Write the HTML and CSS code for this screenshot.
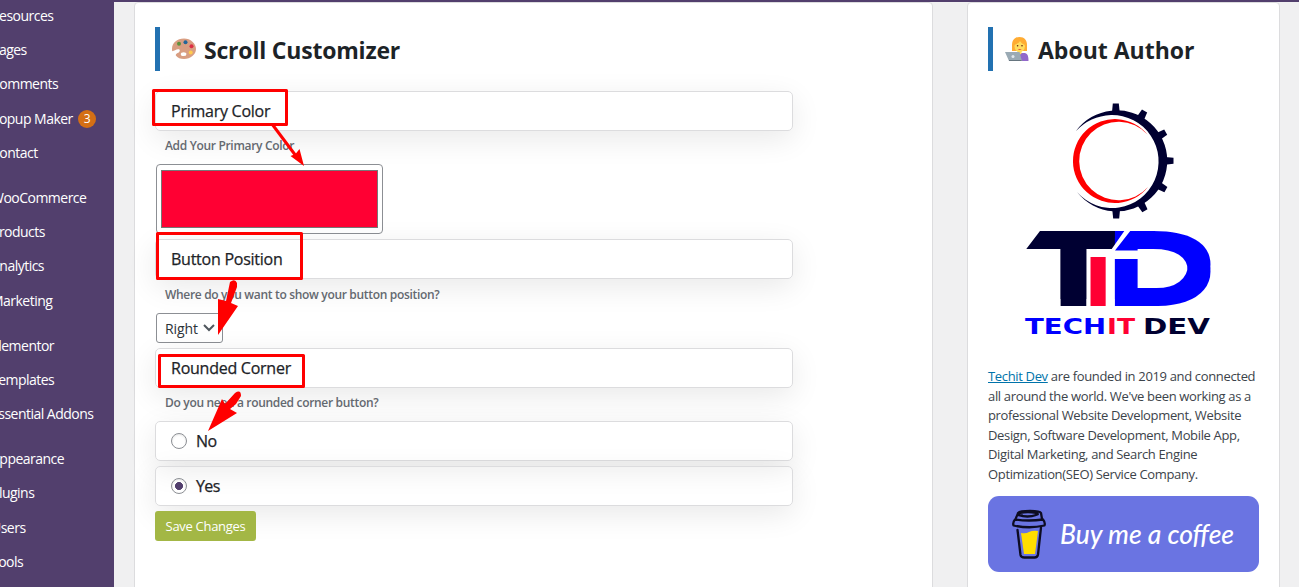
FILE: index.html
```html
<!DOCTYPE html>
<html lang="en">
<head>
<meta charset="utf-8">
<title>Scroll Customizer</title>
<link rel="stylesheet" href="styles.css">
</head>
<body>
<div class="topbar"></div>
<div class="layout">
  <nav class="sidebar">
    <ul class="group"><li>Resources</li><li>Pages</li><li>Comments</li><li>Popup Maker <span class="count">3</span></li><li>Contact</li></ul>
    <ul class="group"><li>WooCommerce</li><li>Products</li><li>Analytics</li><li>Marketing</li></ul>
    <ul class="group"><li>Elementor</li><li>Templates</li><li>Essential Addons</li></ul>
    <ul class="group"><li>Appearance</li><li>Plugins</li><li>Users</li><li>Tools</li></ul>
  </nav>
  <main class="panel settings">
    <h2 class="title">
      <svg class="emoji" viewBox="0 0 24 24"><path fill="#d99e82" d="M12 1.500C5 1.500 0 6 0 12c0 .8.1 1.600.3 2.200C2 14 4 12.500 6 12.300 8.500 12.200 8 14.500 6.800 15.400 5 16 3.500 17 3.800 18.500 5.500 21 8.500 22 12 22c6.500 0 12-4.500 12-10S18.500 1.500 12 1.500z"/><ellipse cx="11.600" cy="17.200" rx="2.800" ry="1.900" fill="#fff"/><circle cx="7" cy="6.800" r="2" fill="#5c913b"/><circle cx="13.500" cy="5.200" r="2" fill="#226699"/><circle cx="19.500" cy="9.300" r="2" fill="#dd2e44"/><circle cx="18.700" cy="15.500" r="2" fill="#ffcc4d"/></svg>
      <span class="title-main">Scroll Customizer</span>
    </h2>
    <div class="field">Primary Color</div>
    <p class="hint">Add Your Primary Color</p>
    <div class="color"><div class="swatch"></div></div>
    <div class="field">Button Position</div>
    <p class="hint hint-low">Where do you want to show your button position?</p>
    <div class="select"><span>Right</span><svg width="12" height="8" viewBox="0 0 12 8"><path d="M1 1l5 5 5-5" fill="none" stroke="#50575e" stroke-width="2"/></svg></div>
    <div class="field">Rounded Corner</div>
    <p class="hint">Do you need a rounded corner button?</p>
    <label class="field option"><span class="radio"></span>No</label>
    <label class="field option"><span class="radio checked"></span>Yes</label>
    <button class="save">Save Changes</button>
  </main>
  <aside class="panel author">
    <h2 class="title">
      <svg class="emoji" viewBox="0 0 24 24"><path fill="#ffac33" d="M14.500 0C9.500 0 7 3.500 7 8v6h15V8c0-4.500-2.500-8-7.500-8z"/><path fill="#9268ca" d="M9 24c0-5 2-8 6-8h4c3 0 4.500 2 4.500 8z"/><path fill="#ffdc5d" d="M12.500 12h4v4.500c-1 1.500-3 1.500-4 0z"/><ellipse cx="14.700" cy="9.300" rx="5.200" ry="6" fill="#ffdc5d"/><path fill="#ffac33" d="M9 8c3-1 5-2 6-4 1 2 3 3 5 4l-1-5-5-2-4 2z"/><circle cx="12.600" cy="8.700" r=".8" fill="#662113"/><circle cx="17" cy="8.700" r=".8" fill="#662113"/><path d="M12.700 12.300q2 1.500 4 0z" fill="#df1f32"/><path fill="#9aaab4" d="M0 15h14.500l2 7.500.8 1.500H4z"/><path fill="#66757f" d="M4 23h12.500v1H4z"/><circle cx="8" cy="19.500" r="1.500" fill="#e1e8ed"/></svg>
      <span class="title-side">About Author</span>
    </h2>
    <svg class="logo" width="271" height="271" viewBox="988 84 271 271">
      <defs><filter id="thick" x="-10%" y="-10%" width="120%" height="130%"><feOffset dy="7" result="low"/><feMerge><feMergeNode in="low"/><feMergeNode in="SourceGraphic"/></feMerge></filter></defs>
      <path fill="#000031" d="M1076 131A50.500 50.500 0 1 1 1077 192A46.500 46.500 0 1 0 1111 115Q1090 116 1076 131z"/>
      <g fill="#000031"><path id="cog" d="M1112 112l.8-8.500h6l.9 8.500z"/><use href="#cog" transform="rotate(30 1116 161)"/><use href="#cog" transform="rotate(60 1116 161)"/><use href="#cog" transform="rotate(90 1116 161)"/><use href="#cog" transform="rotate(120 1116 161)"/><use href="#cog" transform="rotate(150 1116 161)"/><use href="#cog" transform="rotate(180 1116 161)"/></g>
      <path fill="#f00" d="M1147.500 134.500A42 42 0 1 0 1148 187A39.300 39.300 0 1 1 1147.500 134.500z"/>
      <g class="mark">
        <text class="mark-tall" fill="#000031" filter="url(#thick)" transform="matrix(1.830 0 0 1 1019 299)">T</text>
        <text class="mark-short" fill="#ff0033" transform="matrix(1.500 0 0 1 1083.500 305.500)">I</text>
        <text class="mark-tall" fill="#0000ff" filter="url(#thick)" transform="matrix(1.600 0 0 1 1104.600 299)">D</text>
      </g>
      <path fill="#fff" d="M1020 229h21.500L1025.500 250v2H1020zM1125 230h6l-16 20.500h23v8.500h-27v-9z"/>
      <g class="wordmark">
        <text x="1025" y="334" textLength="81" lengthAdjust="spacingAndGlyphs" fill="#0000ff">TECH</text>
        <text x="1107" y="334" textLength="28" lengthAdjust="spacingAndGlyphs" fill="#ff0033">IT</text>
        <text x="1143" y="334" textLength="67" lengthAdjust="spacingAndGlyphs" fill="#000031">DEV</text>
      </g>
    </svg>
    <p class="bio"><a class="link">Techit Dev</a> are founded in 2019 and connected<br>all around the world. We've been working as a<br>professional Website Development, Website<br>Design, Software Development, Mobile App,<br>Digital Marketing, and Search Engine<br>Optimization(SEO) Service Company.</p>
    <svg class="coffee" width="271" height="76" viewBox="988 496 271 76">
      <path fill="#ffdd00" d="M1021 533q5 1 8-1 4-2 9-1l-3 23h-11z"/>
      <g fill="none" stroke="#0d0c22" stroke-width="2.300" stroke-linecap="round" stroke-linejoin="round"><path d="M1017.500 530l3 25q.5 2.500 4 2.500h10q3 0 3.500-3l3-27"/><path d="M1015 519.500q14 2 28 0 2.500 3 1.500 6-15 3.500-31 0-1-3 1.500-6z"/><path d="M1016 518q1-3 2-3 10 3 18 0 4-1 0-2-8-2-16 0-6 2 2 2.500M1018 513q2-2 12-2t11 2l1 6"/></g>
      <text class="coffee-text" x="1060" y="544" textLength="174" lengthAdjust="spacingAndGlyphs">Buy me a coffee</text>
    </svg>
  </aside>
</div>
<svg class="annotations" width="1299" height="587" viewBox="0 0 1299 587">
  <g fill="none" stroke="#f00" stroke-width="3" stroke-linejoin="round"><rect x="153.500" y="90.500" width="133" height="34"/><rect x="157.500" y="233.500" width="144" height="45"/><rect x="159.500" y="355.500" width="144" height="31"/><path d="M272 124l24 32"/></g>
  <g fill="#f00"><path d="M304 166l-13.500-10 5-2 4-5z"/><path d="M230 282q5-4 7 1v4l-6 16 7 3-20 29V299l8 2z"/><path d="M235 393q6-4 6 3l-5 8-6 5 7 4-29 18 14-32 3 5z"/></g>
</svg>
</body>
</html>
```
FILE: styles.css
```css
* { box-sizing: border-box; }
body {
  margin: 0;
  height: 587px;
  overflow: hidden;
  background: #f0f0f1;
  color: #1d2327;
  font-family: "Open Sans", "Noto Sans", sans-serif;
}
.topbar { height: 2px; background: #523f6d; }
.layout { display: flex; height: 585px; }
.sidebar {
  width: 114px;
  flex: none;
  background: #523f6d;
  color: #fff;
  font-size: 14px;
  overflow: hidden;
  margin-top: -3px;
}
.group { list-style: none; margin: 0 0 11px -9px; padding: 0; white-space: nowrap; letter-spacing: -0.52px; }
.group li { height: 34.200px; line-height: 34.200px; }
.count {
  display: inline-block;
  width: 18px;
  height: 18px;
  margin-left: 2px;
  border-radius: 50%;
  background: #d46f15;
  font-size: 12px;
  line-height: 18px;
  text-align: center;
  vertical-align: 1px;
}
.panel { flex: none; background: #fff; border: 1px solid #dcdcde; border-radius: 4px 4px 0 0; padding: 24px 20px 0; height: 600px; }
.settings { width: 799px; margin-left: 20px; }
.author { width: 313px; margin-left: 34px; }
.title {
  display: flex;
  align-items: center;
  height: 44px;
  margin: 0 0 20px;
  padding: 2px 0 0 12px;
  border-left: 5px solid #2271b1;
  font-size: 23px;
  font-weight: 700;
  white-space: nowrap;
}
.title-main { letter-spacing: -0.2px; }
.title-side { margin-left: 1px; }
.emoji { width: 24px; height: 24px; margin: -3px 8px 0 0; }
.field {
  display: flex;
  align-items: center;
  width: 638px;
  height: 40px;
  padding: 0 15px;
  border: 1px solid #dcdcde;
  border-radius: 5px;
  box-shadow: 0 8px 30px rgba(0, 0, 0, .09);
  font-size: 16px;
  letter-spacing: -0.25px;
  -webkit-text-stroke: 0.25px #1d2327;
}
.hint {
  margin: 0;
  padding-left: 10px;
  color: #646970;
  font-size: 12px;
  font-weight: 600;
  line-height: 30px;
  height: 33px;
  letter-spacing: -0.32px;
}
.hint-low { line-height: 32px; }
.color { width: 227px; height: 70px; margin: 0 0 5px 1px; padding: 5px 4px; border: 1px solid #8c8f94; border-radius: 4px; background: #fff; }
.swatch { height: 58px; border: 1px solid #777; background: #ff0033; }
.select {
  display: flex;
  align-items: center;
  justify-content: space-between;
  width: 67px;
  height: 30px;
  margin: 1px 0 5px 1px;
  padding: 0 7px 0 8px;
  border: 1px solid #8c8f94;
  border-radius: 3px;
  background: #fff;
  color: #2c3338;
  font-size: 14px;
  letter-spacing: -0.1px;
}
.option { margin-bottom: 5px; gap: 9px; letter-spacing: -0.6px; }
.radio { width: 16px; height: 16px; border: 1px solid #8c8f94; border-radius: 50%; background: #fff; box-shadow: inset 0 1px 2px rgba(0, 0, 0, .1); }
.checked { background: radial-gradient(circle, #523f6d 0 3.700px, #fff 4.300px); }
.save { display: block; width: 101px; height: 30px; padding: 0; border: 0; border-radius: 3px; background: #a3b745; color: #fff; font: 13px "Open Sans", sans-serif; letter-spacing: -0.3px; }
.logo { display: block; margin-top: -7px; }
.mark, .wordmark { font-weight: 700; }
.mark { font-family: "Liberation Sans", sans-serif; }
.mark-tall { font-size: 97.400px; }
.mark-short { font-size: 70px; }
.wordmark { font-family: "DejaVu Sans", sans-serif; font-size: 21.500px; }
.bio { margin: 12px 0; color: #3c434a; font-size: 13px; line-height: 19.500px; white-space: nowrap; letter-spacing: -0.34px; }
.link { color: #0073aa; text-decoration: underline; }
.coffee { display: block; border-radius: 11px; background: #6a74e2; }
.coffee-text { fill: #fff; font: italic 500 27px Lato, sans-serif; }
.annotations { position: absolute; left: 0; top: 0; }
```
